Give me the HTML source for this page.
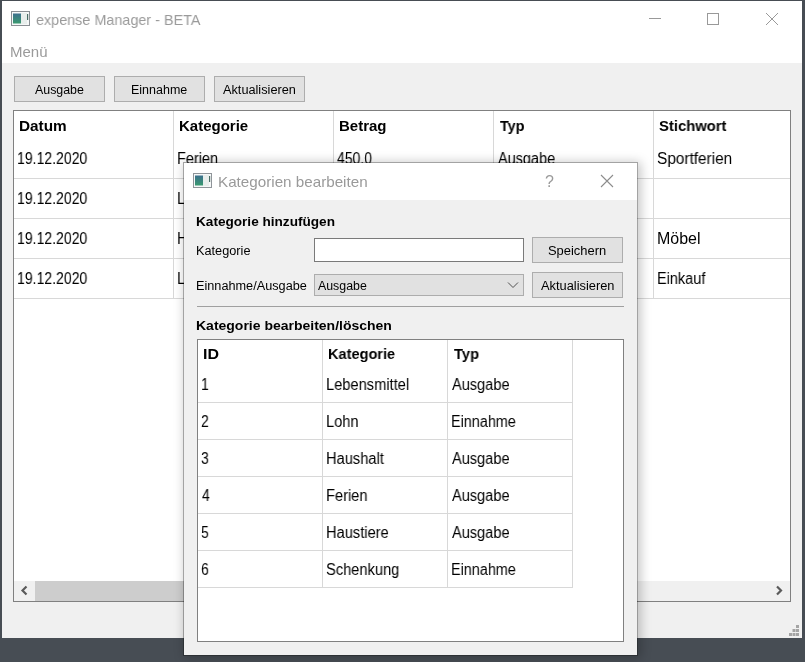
<!DOCTYPE html>
<html><head><meta charset="utf-8"><style>
html,body{margin:0;padding:0;width:805px;height:662px;overflow:hidden;background:#474d54}
body{position:relative;font-family:"Liberation Sans",sans-serif}
.r{position:absolute;box-sizing:border-box}
.t{position:absolute;white-space:nowrap;transform-origin:0 0;will-change:transform}
</style></head><body>
<div class="r" style="left:0px;top:0px;width:805px;height:662px;background:#474d54"></div>
<div class="r" style="left:2px;top:1px;width:800px;height:637px;background:#f0f0f0"></div>
<div class="r" style="left:2px;top:1px;width:800px;height:62px;background:#fff"></div>
<svg class="r" style="left:11px;top:11px" width="19" height="15" viewBox="0 0 19 15"><defs><linearGradient id="g1" x1="0" y1="0" x2="0" y2="1"><stop offset="0" stop-color="#3b6f8c"/><stop offset="1" stop-color="#3a9a70"/></linearGradient></defs><rect x="0.5" y="0.5" width="18" height="14" fill="#f6f8f8" stroke="#8a8f94"/><rect x="2" y="2.5" width="8" height="10" fill="url(#g1)"/><rect x="10" y="2" width="6" height="11" fill="#e8eeec"/><rect x="16" y="3" width="1.2" height="6" fill="#4a6d66"/></svg>
<div class="t" style="left:35.74px;top:12px;font-size:15px;line-height:15px;color:#9a9a9a;transform:scaleX(0.9588);">expense Manager - BETA</div>
<svg class="r" style="left:640px;top:5px" width="150" height="30" viewBox="0 0 150 30"><line x1="9" y1="13.5" x2="21" y2="13.5" stroke="#999" stroke-width="1"/><rect x="67.5" y="8.5" width="11" height="11" fill="none" stroke="#999"/><path d="M126 8 L138 20 M138 8 L126 20" stroke="#999" stroke-width="1"/></svg>
<div class="t" style="left:9.70px;top:44px;font-size:15px;line-height:15px;color:#9a9a9a;">Menü</div>
<div class="r" style="left:14px;top:76px;width:91px;height:26px;background:#e1e1e1;border:1px solid #adadad;box-sizing:border-box"></div>
<div class="t" style="left:35.25px;top:84px;font-size:12px;line-height:12px;color:#000;transform:scaleX(1.0319);">Ausgabe</div>
<div class="r" style="left:114px;top:76px;width:91px;height:26px;background:#e1e1e1;border:1px solid #adadad;box-sizing:border-box"></div>
<div class="t" style="left:130.86px;top:84px;font-size:12px;line-height:12px;color:#000;transform:scaleX(1.0415);">Einnahme</div>
<div class="r" style="left:214px;top:76px;width:91px;height:26px;background:#e1e1e1;border:1px solid #adadad;box-sizing:border-box"></div>
<div class="t" style="left:223.45px;top:84px;font-size:12px;line-height:12px;color:#000;transform:scaleX(1.0603);">Aktualisieren</div>
<div class="r" style="left:13px;top:110px;width:778px;height:492px;background:#fff;border:1px solid #808080;box-sizing:border-box"></div>
<div class="r" style="left:14px;top:178px;width:776px;height:1px;background:#d8d8d8"></div>
<div class="r" style="left:14px;top:218px;width:776px;height:1px;background:#d8d8d8"></div>
<div class="r" style="left:14px;top:258px;width:776px;height:1px;background:#d8d8d8"></div>
<div class="r" style="left:14px;top:298px;width:776px;height:1px;background:#d8d8d8"></div>
<div class="r" style="left:173px;top:111px;width:1px;height:187px;background:#d8d8d8"></div>
<div class="r" style="left:333px;top:111px;width:1px;height:187px;background:#d8d8d8"></div>
<div class="r" style="left:493px;top:111px;width:1px;height:187px;background:#d8d8d8"></div>
<div class="r" style="left:653px;top:111px;width:1px;height:187px;background:#d8d8d8"></div>
<div class="t" style="left:18.88px;top:118px;font-size:15px;line-height:15px;color:#000;font-weight:bold;transform:scaleX(1.0222);">Datum</div>
<div class="t" style="left:178.51px;top:118px;font-size:15px;line-height:15px;color:#000;font-weight:bold;transform:scaleX(0.9941);">Kategorie</div>
<div class="t" style="left:338.80px;top:118px;font-size:15px;line-height:15px;color:#000;font-weight:bold;">Betrag</div>
<div class="t" style="left:500.00px;top:118px;font-size:15px;line-height:15px;color:#000;font-weight:bold;transform:scaleX(0.9520);">Typ</div>
<div class="t" style="left:658.51px;top:118px;font-size:15px;line-height:15px;color:#000;font-weight:bold;transform:scaleX(0.9881);">Stichwort</div>
<div class="t" style="left:17.30px;top:151px;font-size:15.6px;line-height:15.6px;color:#000;transform:scaleX(0.9013);">19.12.2020</div>
<div class="t" style="left:177.27px;top:151px;font-size:15.6px;line-height:15.6px;color:#000;transform:scaleX(0.9300);">Ferien</div>
<div class="t" style="left:337.00px;top:151px;font-size:15.6px;line-height:15.6px;color:#000;transform:scaleX(0.9000);">450.0</div>
<div class="t" style="left:497.60px;top:151px;font-size:15.6px;line-height:15.6px;color:#000;transform:scaleX(0.9279);">Ausgabe</div>
<div class="t" style="left:657.21px;top:151px;font-size:15.6px;line-height:15.6px;color:#000;transform:scaleX(0.9865);">Sportferien</div>
<div class="t" style="left:17.30px;top:191px;font-size:15.6px;line-height:15.6px;color:#000;transform:scaleX(0.9013);">19.12.2020</div>
<div class="t" style="left:177.27px;top:191px;font-size:15.6px;line-height:15.6px;color:#000;transform:scaleX(0.9300);">L</div>
<div class="t" style="left:17.30px;top:231px;font-size:15.6px;line-height:15.6px;color:#000;transform:scaleX(0.9013);">19.12.2020</div>
<div class="t" style="left:177.27px;top:231px;font-size:15.6px;line-height:15.6px;color:#000;transform:scaleX(0.9300);">H</div>
<div class="t" style="left:657.18px;top:231px;font-size:15.6px;line-height:15.6px;color:#000;transform:scaleX(1.0244);">Möbel</div>
<div class="t" style="left:17.30px;top:271px;font-size:15.6px;line-height:15.6px;color:#000;transform:scaleX(0.9013);">19.12.2020</div>
<div class="t" style="left:177.27px;top:271px;font-size:15.6px;line-height:15.6px;color:#000;transform:scaleX(0.9300);">L</div>
<div class="t" style="left:657.27px;top:271px;font-size:15.6px;line-height:15.6px;color:#000;transform:scaleX(0.9294);">Einkauf</div>
<div class="r" style="left:14px;top:581px;width:776px;height:20px;background:#f0f0f0"></div>
<div class="r" style="left:35px;top:581px;width:595px;height:20px;background:#cdcdcd"></div>
<svg class="r" style="left:14px;top:581px" width="776" height="19" viewBox="0 0 776 19"><path d="M12.5 5.5 L8.5 9.5 L12.5 13.5" fill="none" stroke="#5a5a5a" stroke-width="2.2"/><path d="M763 5.5 L767 9.5 L763 13.5" fill="none" stroke="#5a5a5a" stroke-width="2.2"/></svg>
<svg class="r" style="left:788px;top:623px" width="12" height="14" viewBox="0 0 12 14"><g fill="#a4a4a4"><rect x="8" y="2" width="3" height="3"/><rect x="4.5" y="6" width="3" height="3"/><rect x="8" y="6" width="3" height="3"/><rect x="1" y="10" width="3" height="3"/><rect x="4.5" y="10" width="3" height="3"/><rect x="8" y="10" width="3" height="3"/></g></svg>
<div class="r" style="left:183px;top:162px;width:455px;height:494px;box-shadow:2px 1px 10px 1px rgba(0,0,0,0.22)"></div>
<div class="r" style="left:183px;top:162px;width:455px;height:494px;background:#f0f0f0;background-clip:padding-box;border:1px solid rgba(0,0,0,0.36);box-sizing:border-box"></div>
<div class="r" style="left:184px;top:163px;width:453px;height:37px;background:#fff"></div>
<svg class="r" style="left:193px;top:173px" width="19" height="15" viewBox="0 0 19 15"><defs><linearGradient id="g2" x1="0" y1="0" x2="0" y2="1"><stop offset="0" stop-color="#3b6f8c"/><stop offset="1" stop-color="#3a9a70"/></linearGradient></defs><rect x="0.5" y="0.5" width="18" height="14" fill="#f6f8f8" stroke="#8f9499"/><rect x="2" y="2.5" width="8" height="10" fill="url(#g2)"/><rect x="10" y="2" width="6" height="11" fill="#e8eeec"/><rect x="16" y="3" width="1.2" height="6" fill="#4a6d66"/></svg>
<div class="t" style="left:217.99px;top:174px;font-size:15px;line-height:15px;color:#9a9a9a;transform:scaleX(1.0137);">Kategorien bearbeiten</div>
<div class="t" style="left:545.43px;top:174px;font-size:16px;line-height:16px;color:#9a9a9a;transform:scaleX(0.9714);">?</div>
<svg class="r" style="left:600px;top:174px" width="14" height="14" viewBox="0 0 14 14"><path d="M1 1 L13 13 M13 1 L1 13" stroke="#8c8c8c" stroke-width="1.1"/></svg>
<div class="t" style="left:196.45px;top:215px;font-size:13px;line-height:13px;color:#000;font-weight:bold;transform:scaleX(1.0458);">Kategorie hinzufügen</div>
<div class="t" style="left:196.44px;top:245px;font-size:12px;line-height:12px;color:#000;transform:scaleX(1.0600);">Kategorie</div>
<div class="t" style="left:196.44px;top:280px;font-size:12px;line-height:12px;color:#000;transform:scaleX(1.0583);">Einnahme/Ausgabe</div>
<div class="r" style="left:314px;top:238px;width:210px;height:24px;background:#fff;border:1px solid #7a7a7a;box-sizing:border-box"></div>
<div class="r" style="left:314px;top:274px;width:210px;height:22px;background:#e1e1e1;border:1px solid #adadad;box-sizing:border-box"></div>
<div class="t" style="left:318.00px;top:280px;font-size:12px;line-height:12px;color:#000;transform:scaleX(1.0300);">Ausgabe</div>
<svg class="r" style="left:506px;top:280px" width="14" height="10" viewBox="0 0 14 10"><path d="M2 2.5 L7 7.5 L12 2.5" fill="none" stroke="#505050" stroke-width="1"/></svg>
<div class="r" style="left:532px;top:237px;width:91px;height:26px;background:#e1e1e1;border:1px solid #adadad;box-sizing:border-box"></div>
<div class="t" style="left:548.12px;top:245px;font-size:12px;line-height:12px;color:#000;transform:scaleX(1.0769);">Speichern</div>
<div class="r" style="left:532px;top:272px;width:91px;height:26px;background:#e1e1e1;border:1px solid #adadad;box-sizing:border-box"></div>
<div class="t" style="left:541.20px;top:280px;font-size:12px;line-height:12px;color:#000;transform:scaleX(1.0691);">Aktualisieren</div>
<div class="r" style="left:197px;top:306px;width:427px;height:1px;background:#a0a0a0"></div>
<div class="t" style="left:196.42px;top:319px;font-size:13px;line-height:13px;color:#000;font-weight:bold;transform:scaleX(1.0761);">Kategorie bearbeiten/löschen</div>
<div class="r" style="left:197px;top:339px;width:427px;height:303px;background:#fff;border:1px solid #808080;box-sizing:border-box"></div>
<div class="r" style="left:322px;top:340px;width:1px;height:247px;background:#d8d8d8"></div>
<div class="r" style="left:447px;top:340px;width:1px;height:247px;background:#d8d8d8"></div>
<div class="r" style="left:572px;top:340px;width:1px;height:247px;background:#d8d8d8"></div>
<div class="r" style="left:198px;top:402px;width:375px;height:1px;background:#d8d8d8"></div>
<div class="r" style="left:198px;top:439px;width:375px;height:1px;background:#d8d8d8"></div>
<div class="r" style="left:198px;top:476px;width:375px;height:1px;background:#d8d8d8"></div>
<div class="r" style="left:198px;top:513px;width:375px;height:1px;background:#d8d8d8"></div>
<div class="r" style="left:198px;top:550px;width:375px;height:1px;background:#d8d8d8"></div>
<div class="r" style="left:198px;top:587px;width:375px;height:1px;background:#d8d8d8"></div>
<div class="t" style="left:202.94px;top:346px;font-size:15px;line-height:15px;color:#000;font-weight:bold;transform:scaleX(1.0643);">ID</div>
<div class="t" style="left:328.03px;top:346px;font-size:15px;line-height:15px;color:#000;font-weight:bold;transform:scaleX(0.9706);">Kategorie</div>
<div class="t" style="left:453.90px;top:346px;font-size:15px;line-height:15px;color:#000;font-weight:bold;transform:scaleX(0.9760);">Typ</div>
<div class="t" style="left:200.90px;top:377px;font-size:15.6px;line-height:15.6px;color:#000;transform:scaleX(0.9000);">1</div>
<div class="t" style="left:325.86px;top:377px;font-size:15.6px;line-height:15.6px;color:#000;transform:scaleX(0.9400);">Lebensmittel</div>
<div class="t" style="left:451.70px;top:377px;font-size:15.6px;line-height:15.6px;color:#000;transform:scaleX(0.9344);">Ausgabe</div>
<div class="t" style="left:200.90px;top:414px;font-size:15.6px;line-height:15.6px;color:#000;transform:scaleX(0.9000);">2</div>
<div class="t" style="left:325.86px;top:414px;font-size:15.6px;line-height:15.6px;color:#000;transform:scaleX(0.9400);">Lohn</div>
<div class="t" style="left:450.78px;top:414px;font-size:15.6px;line-height:15.6px;color:#000;transform:scaleX(0.9232);">Einnahme</div>
<div class="t" style="left:200.90px;top:451px;font-size:15.6px;line-height:15.6px;color:#000;transform:scaleX(0.9000);">3</div>
<div class="t" style="left:325.86px;top:451px;font-size:15.6px;line-height:15.6px;color:#000;transform:scaleX(0.9400);">Haushalt</div>
<div class="t" style="left:451.70px;top:451px;font-size:15.6px;line-height:15.6px;color:#000;transform:scaleX(0.9344);">Ausgabe</div>
<div class="t" style="left:201.80px;top:488px;font-size:15.6px;line-height:15.6px;color:#000;transform:scaleX(0.9000);">4</div>
<div class="t" style="left:325.86px;top:488px;font-size:15.6px;line-height:15.6px;color:#000;transform:scaleX(0.9400);">Ferien</div>
<div class="t" style="left:451.70px;top:488px;font-size:15.6px;line-height:15.6px;color:#000;transform:scaleX(0.9344);">Ausgabe</div>
<div class="t" style="left:200.90px;top:525px;font-size:15.6px;line-height:15.6px;color:#000;transform:scaleX(0.9000);">5</div>
<div class="t" style="left:325.86px;top:525px;font-size:15.6px;line-height:15.6px;color:#000;transform:scaleX(0.9400);">Haustiere</div>
<div class="t" style="left:451.70px;top:525px;font-size:15.6px;line-height:15.6px;color:#000;transform:scaleX(0.9344);">Ausgabe</div>
<div class="t" style="left:200.90px;top:562px;font-size:15.6px;line-height:15.6px;color:#000;transform:scaleX(0.9000);">6</div>
<div class="t" style="left:325.86px;top:562px;font-size:15.6px;line-height:15.6px;color:#000;transform:scaleX(0.9400);">Schenkung</div>
<div class="t" style="left:450.78px;top:562px;font-size:15.6px;line-height:15.6px;color:#000;transform:scaleX(0.9232);">Einnahme</div>
</body></html>
